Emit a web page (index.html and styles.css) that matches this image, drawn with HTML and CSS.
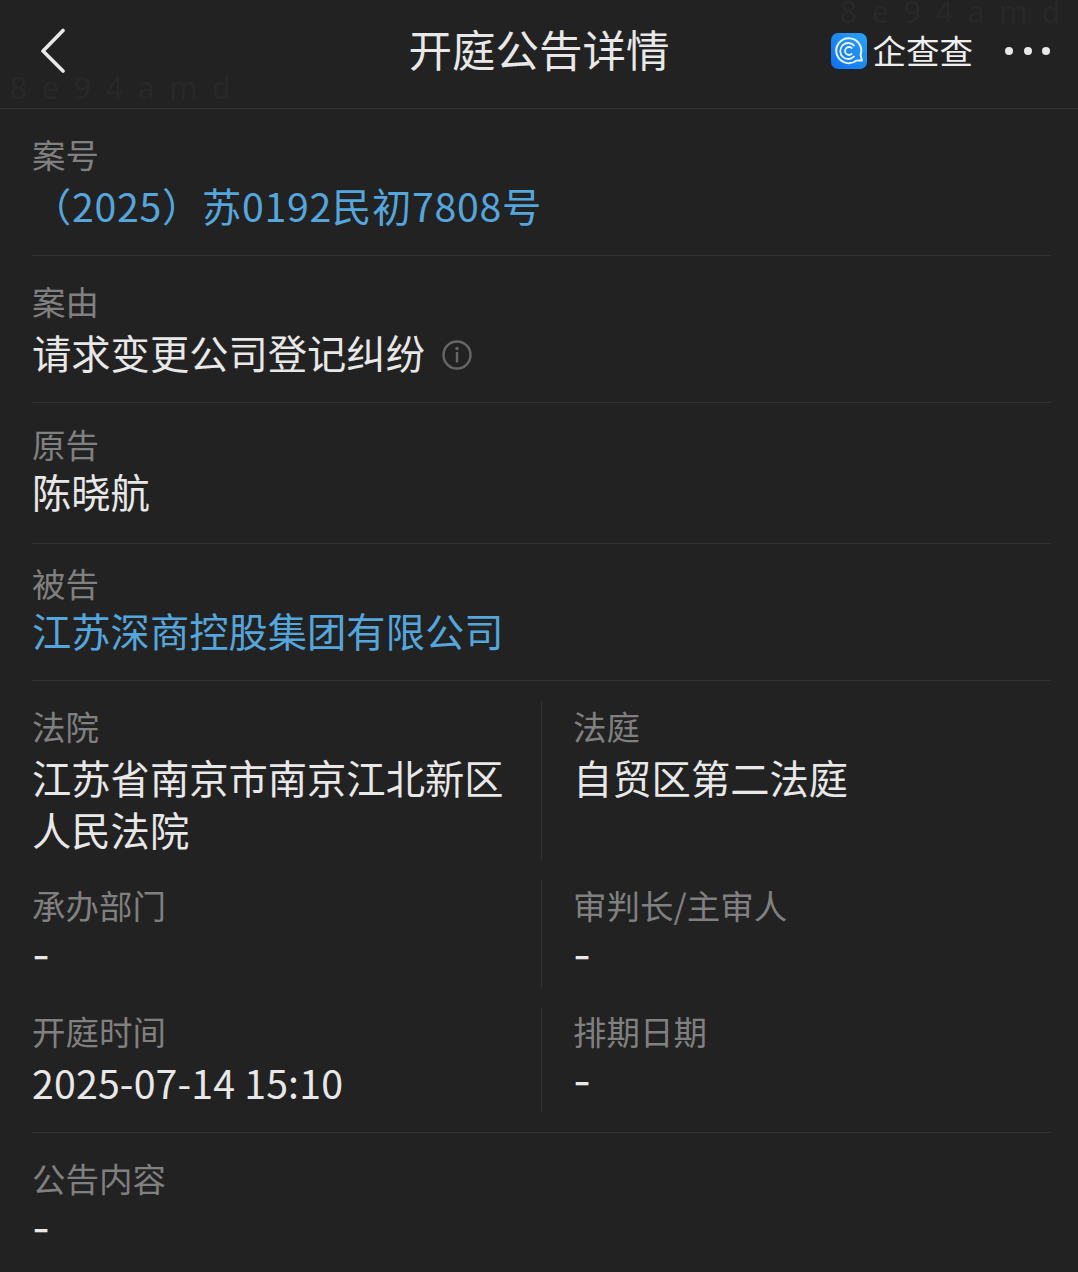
FILE: index.html
```html
<!DOCTYPE html>
<html lang="zh-CN">
<head>
    <meta charset="UTF-8">
    <meta name="viewport" content="width=device-width, initial-scale=1.0">
    <link rel="stylesheet" href="styles.css">
    <title>开庭公告详情</title>
</head>
<body>
    <header class="topbar">
        <svg class="back" width="30" height="46" viewBox="0 0 30 46">
            <path d="M25 2.500 L5 23 L25 43" fill="none" stroke="#e8e8e8" stroke-width="3.600" stroke-linecap="round" stroke-linejoin="round"/>
        </svg>
        <h1 class="title">开庭公告详情</h1>
        <div class="brand">
            <svg class="brand-icon" width="36" height="36" viewBox="0 0 36 36">
                <defs>
                    <linearGradient id="logoBg" x1="1" y1="0" x2="0" y2="1">
                        <stop offset="0" stop-color="#2aa3f5"/>
                        <stop offset="1" stop-color="#0f6ff0"/>
                    </linearGradient>
                </defs>
                <rect width="36" height="36" rx="7" fill="url(#logoBg)"/>
                <path d="M25.500 27.500 A12.500 12.500 0 1 1 29.500 22 L31 27.500 L25.500 27.500" fill="none" stroke="#e6f3ff" stroke-width="2" stroke-linejoin="round"/>
                <path d="M23.500 23 A8 8 0 1 1 23.500 13" fill="none" stroke="#e6f3ff" stroke-width="1.800"/>
                <path d="M21.200 20.400 A4 4 0 1 1 21.200 15.600" fill="none" stroke="#e6f3ff" stroke-width="1.800"/>
            </svg>
            <span class="brand-name">企查查</span>
        </div>
        <div class="more"><i></i><i></i><i></i></div>
    </header>

    <span class="mark mark-left">8 e 9 4 a m d</span>
    <span class="mark mark-right">8 e 9 4 a m d</span>

    <main class="content">
        <section class="row row-case">
            <div class="label label-wide">案号</div>
            <div class="value link case-no">（2025）苏0192民初7808号</div>
        </section>
        <section class="row row-cause">
            <div class="label label-wide">案由</div>
            <div class="value">请求变更公司登记纠纷
                <svg class="info" width="30" height="30" viewBox="0 0 30 30">
                    <circle cx="15" cy="15" r="13.500" fill="none" stroke="#666" stroke-width="2.400"/>
                    <circle cx="15" cy="8.500" r="1.700" fill="#666"/>
                    <rect x="13.800" y="12" width="2.400" height="10.500" fill="#666"/>
                </svg>
            </div>
        </section>
        <section class="row row-plain">
            <div class="label label-tight">原告</div>
            <div class="value">陈晓航</div>
        </section>
        <section class="row row-plain">
            <div class="label label-tight">被告</div>
            <div class="value link">江苏深商控股集团有限公司</div>
        </section>

        <section class="row grid-block">
            <div class="pair pair-court">
                <div class="cell">
                    <div class="label label-wide">法院</div>
                    <div class="value">江苏省南京市南京江北新区人民法院</div>
                </div>
                <div class="cell">
                    <div class="label label-wide">法庭</div>
                    <div class="value">自贸区第二法庭</div>
                </div>
            </div>
            <div class="pair pair-dept">
                <div class="cell">
                    <div class="label">承办部门</div>
                    <div class="value dash">-</div>
                </div>
                <div class="cell">
                    <div class="label">审判长/主审人</div>
                    <div class="value dash">-</div>
                </div>
            </div>
            <div class="pair pair-time">
                <div class="cell">
                    <div class="label label-wide">开庭时间</div>
                    <div class="value date">2025-07-14 15:10</div>
                </div>
                <div class="cell">
                    <div class="label">排期日期</div>
                    <div class="value dash">-</div>
                </div>
            </div>
        </section>

        <section class="row row-last">
            <div class="label">公告内容</div>
            <div class="value dash">-</div>
        </section>
    </main>
</body>
</html>
```

FILE: styles.css
```css
* {
    box-sizing: border-box;
}

html,
body {
    height: 100%;
}

body {
    position: relative;
    margin: 0;
    overflow: hidden;
    background-color: #222222;
    color: #e8e8e8;
    font-family: "Noto Sans CJK SC", "Noto Sans", sans-serif;
}

.topbar {
    display: flex;
    align-items: center;
    height: 109px;
    padding: 0 28px 6px 38px;
    border-bottom: 1px solid #323232;
}

.back {
    flex: none;
}

.title {
    position: absolute;
    top: 19px;
    left: 0;
    width: 100%;
    margin: 0;
    color: #e8e8e8;
    font-size: 43.500px;
    font-weight: 400;
    line-height: 60px;
    text-align: center;
}

.brand {
    display: flex;
    align-items: center;
    gap: 6px;
    margin-left: auto;
}

.brand-icon {
    flex: none;
}

.brand-name {
    margin-top: -2px;
    color: #efefef;
    font-size: 33.500px;
    font-weight: 400;
    line-height: 34px;
}

.more {
    display: flex;
    gap: 10.500px;
    margin-left: 32px;
}

.more i {
    width: 8px;
    height: 8px;
    border-radius: 50%;
    background-color: #e8e8e8;
}

/* faint watermark behind the header */
.mark {
    position: absolute;
    color: #282828;
    font-family: "Noto Sans", sans-serif;
    font-size: 30px;
    letter-spacing: 3.500px;
    line-height: 24px;
    white-space: nowrap;
}

.mark-left {
    top: 76px;
    left: 10px;
}

.mark-right {
    top: 0;
    left: 840px;
}

.content {
    padding: 0 27px 0 32px;
}

.row {
    border-bottom: 1px solid #323232;
}

.row-case {
    height: 147px;
    padding-top: 23px;
}

.row-cause {
    height: 147px;
    padding-top: 23px;
}

.row-plain {
    height: 141px;
    padding-top: 19px;
}

.row-plain + .row-plain {
    height: 137px;
    padding-top: 17px;
}

.row-last {
    border-bottom: 0;
    padding-top: 23px;
}

.label {
    color: #808080;
    font-size: 33.500px;
    line-height: 44px;
}

.label-wide {
    margin-bottom: 3px;
}

.label-tight {
    line-height: 43px;
}

.value {
    display: flex;
    align-items: center;
    color: #e8e8e8;
    font-size: 39.300px;
    line-height: 52px;
}

.link {
    color: #54a6dc;
}

.case-no {
    letter-spacing: 0.700px;
}

.date {
    letter-spacing: 0.150px;
}

.dash {
    padding-top: 3px;
    font-family: "Inter", sans-serif;
}

.info {
    margin-top: 6px;
    margin-left: 17px;
}

.grid-block {
    display: flex;
    flex-direction: column;
    gap: 20px;
    padding: 21px 0 20px;
}

.pair {
    display: grid;
    grid-template-columns: 509px 1fr;
}

.pair-court {
    min-height: 158px;
}

.pair-dept {
    min-height: 107px;
}

.pair-time {
    min-height: 105px;
}

.cell {
    min-width: 0;
}

.pair-court .cell {
    padding-top: 2px;
}

.pair-dept .cell {
    padding-top: 3px;
}

.pair-time .cell {
    padding-top: 2px;
}

.cell + .cell {
    padding-left: 31px;
    border-left: 1px solid #323232;
}

.cell:first-child {
    padding-right: 32px;
}

.cell .value {
    display: block;
}
```
